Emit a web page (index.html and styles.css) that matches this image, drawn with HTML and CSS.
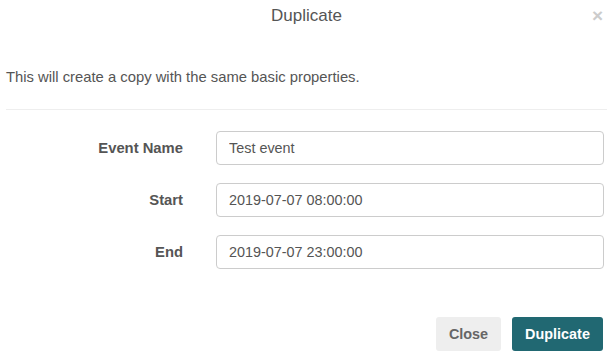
FILE: index.html
```html
<!DOCTYPE html>
<html lang="en">
<head>
    <meta charset="UTF-8">
    <title>Duplicate</title>
    <link rel="stylesheet" href="styles.css">
</head>
<body>
    <div class="modal">
        <div class="modal-header">
            <span></span>
            <h4 class="modal-title">Duplicate</h4>
            <button class="close" type="button">&times;</button>
        </div>
        <div class="modal-body">
            <p class="intro">This will create a copy with the same basic properties.</p>
            <hr>
            <form class="form-horizontal">
                <div class="form-group">
                    <label for="eventName">Event Name</label>
                    <input type="text" id="eventName" value="Test event">
                </div>
                <div class="form-group">
                    <label for="start">Start</label>
                    <input type="text" id="start" value="2019-07-07 08:00:00">
                </div>
                <div class="form-group">
                    <label for="end">End</label>
                    <input type="text" id="end" value="2019-07-07 23:00:00">
                </div>
            </form>
        </div>
        <div class="modal-footer">
            <button type="button" class="btn btn-default">Close</button>
            <button type="button" class="btn btn-primary">Duplicate</button>
        </div>
    </div>
</body>
</html>
```

FILE: styles.css
```css
body {
    margin: 0;
    font-family: "Liberation Sans", Arial, sans-serif;
    font-size: 14.8px;
    color: #555;
    background: #fff;
}
.modal {
    width: 613px;
    height: 360px;
    box-sizing: border-box;
    padding: 0 6px;
}
.modal-header {
    display: grid;
    grid-template-columns: 40px 1fr 40px;
    align-items: center;
    height: 31px;
}
.modal-title {
    margin: 0;
    text-align: center;
    font-size: 17px;
    font-weight: normal;
    color: #555;
}
.close {
    justify-self: end;
    background: none;
    border: none;
    padding: 0 4px 0 0;
    font-family: "Liberation Sans", Arial, sans-serif;
    font-size: 19px;
    font-weight: bold;
    line-height: 1;
    color: #ccc;
    cursor: pointer;
}
.modal-body {
    padding-top: 37px;
}
.intro {
    margin: 0;
    line-height: 18px;
}
hr {
    margin: 23px 0 21px;
    border: 0;
    border-top: 1px solid #eee;
}
.form-group {
    display: grid;
    grid-template-columns: 177px 1fr;
    column-gap: 33px;
    align-items: center;
    margin-bottom: 18px;
}
.form-group label {
    text-align: right;
    font-weight: bold;
}
.form-group input {
    height: 34px;
    box-sizing: border-box;
    margin-right: 3px;
    padding: 6px 12px;
    border: 1px solid #ccc;
    border-radius: 4px;
    font-family: "Liberation Sans", Arial, sans-serif;
    font-size: 14.4px;
    color: #555;
}
.modal-footer {
    display: flex;
    justify-content: flex-end;
    gap: 11px;
    padding: 30px 4px 0 0;
}
.btn {
    height: 34px;
    padding: 6px 12px;
    border: none;
    border-radius: 3px;
    font-family: "Liberation Sans", Arial, sans-serif;
    font-size: 14.4px;
    font-weight: bold;
    cursor: pointer;
}
.btn-default {
    width: 65px;
    background: #eee;
    color: #666;
}
.btn-primary {
    width: 91px;
    background: #216872;
    color: #fff;
}
```
